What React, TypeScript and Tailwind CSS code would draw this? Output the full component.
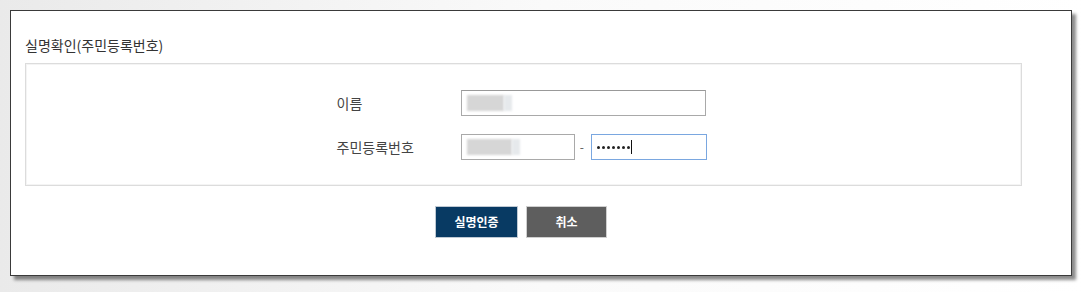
import React from "react";

const font = { fontFamily: '"Noto Sans CJK KR", "Noto Sans", sans-serif' };

function Blur({ w }: { w: number }) {
  return (
    <div className="flex h-[18px] items-center">
      <div className="h-[16px] bg-[#d6d6d6] blur-[1px]" style={{ width: w }} />
      <div className="h-[16px] w-[8px] bg-[#e6e9ec] blur-[1px]" />
    </div>
  );
}

export default function App() {
  const dots = [0, 1, 2, 3, 4, 5, 6];
  return (
    <div
      className="h-[292px] w-[1086px] bg-gradient-to-r from-[#eaeaea] via-[#fafafa] to-white pl-[10px] pt-[10px]"
      style={font}
    >
      <div className="flex h-[266px] w-[1062px] flex-col border border-[#3a3a3a] bg-white pl-[14px] pr-[49px] shadow-[4px_4px_3px_rgba(0,0,0,0.45)]">
        <div className="mt-[23px] h-[22px] text-[14px] leading-[22px] text-[#333]">실명확인(주민등록번호)</div>
        <div className="mt-[7px] flex h-[123px] flex-col items-center justify-center gap-[18px] border border-[#dcdcdc] pr-[4px] pt-[1px] shadow-[inset_0_0_0_1px_#f4f4f4]">
          <div className="flex w-[370px] items-center pr-[1px]">
            <div className="w-[125px] text-[14px] text-[#444]">이름</div>
            <div className="flex h-[26px] w-[245px] items-center border border-[#a9a9a9] border-t-[#999] pl-[5px]">
              <Blur w={37} />
            </div>
          </div>
          <div className="flex w-[370px] items-center">
            <div className="w-[125px] text-[14px] text-[#444]">주민등록번호</div>
            <div className="flex h-[26px] w-[114px] items-center border border-[#a9a9a9] pl-[5px]">
              <Blur w={45} />
            </div>
            <div className="w-[16px] pl-[5px] text-[12px] text-[#555]">-</div>
            <div className="flex h-[26px] w-[116px] items-center border border-[#7aa7e0] pl-[5px]">
              <div className="flex items-center gap-[2px]">
                {dots.map((d) => (
                  <span key={d} className="h-[3px] w-[3px] rounded-full bg-[#222]" />
                ))}
              </div>
              <span className="ml-[1px] h-[14px] w-[1px] bg-[#111]" />
            </div>
          </div>
        </div>
        <div className="mt-[20px] flex justify-center gap-[8px] pr-[5px]">
          <button className="h-[32px] w-[83px] border border-[#bfc9d3] bg-[#083a63] text-[12px] font-bold text-white">
            실명인증
          </button>
          <button className="h-[32px] w-[81px] border border-[#cfcfcf] bg-[#5e5e5e] text-[12px] font-bold text-white">
            취소
          </button>
        </div>
      </div>
    </div>
  );
}
